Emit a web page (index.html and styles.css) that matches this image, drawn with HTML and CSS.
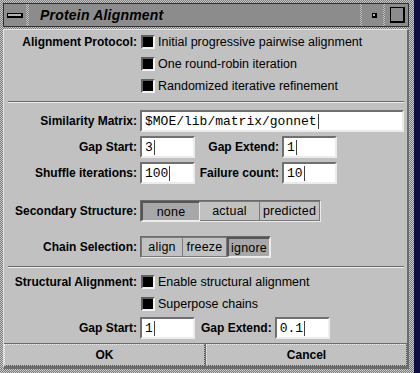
FILE: index.html
```html
<!DOCTYPE html>
<html lang="en">
<head>
  <meta charset="UTF-8">
  <meta name="viewport" content="width=device-width, initial-scale=1.0">
  <title>Protein Alignment</title>
  <link rel="stylesheet" href="styles.css">
</head>
<body>
  <div class="window">
    <div class="titlebar">
      <div class="tb-btn menu"><span class="menu-bar"></span></div>
      <div class="tb-title">Protein Alignment</div>
      <div class="tb-btn min"><span class="min-dot"></span></div>
      <div class="tb-btn max"><span class="max-box"></span></div>
    </div>

    <div class="panel">
      <div class="protocol">
        <div class="row">
          <span class="label">Alignment Protocol:</span>
          <span class="opt"><span class="box"></span>Initial progressive pairwise alignment</span>
        </div>
        <div class="row">
          <span class="label"></span>
          <span class="opt"><span class="box"></span>One round-robin iteration</span>
        </div>
        <div class="row">
          <span class="label"></span>
          <span class="opt"><span class="box"></span>Randomized iterative refinement</span>
        </div>
      </div>

      <div class="sep sep-top"></div>

      <div class="params">
        <span class="label">Similarity Matrix:</span>
        <span class="field wide">$MOE/lib/matrix/gonnet<span class="caret"></span></span>

        <span class="label">Gap Start:</span>
        <span class="field">3<span class="caret"></span></span>
        <span class="label">Gap Extend:</span>
        <span class="field">1<span class="caret"></span></span>
        <span></span>

        <span class="label">Shuffle iterations:</span>
        <span class="field">100<span class="caret"></span></span>
        <span class="label">Failure count:</span>
        <span class="field">10<span class="caret"></span></span>
        <span></span>
      </div>

      <div class="row seg-row secondary">
        <span class="label">Secondary Structure:</span>
        <div class="seg">
          <span class="seg-btn on w-none">none</span>
          <span class="seg-btn w-actual">actual</span>
          <span class="seg-btn w-pred">predicted</span>
        </div>
      </div>

      <div class="row seg-row chain">
        <span class="label">Chain Selection:</span>
        <div class="seg">
          <span class="seg-btn w-align">align</span>
          <span class="seg-btn w-freeze">freeze</span>
          <span class="seg-btn on w-ignore">ignore</span>
        </div>
      </div>

      <div class="sep sep-bottom"></div>

      <div class="structural">
        <div class="row">
          <span class="label">Structural Alignment:</span>
          <span class="opt"><span class="box"></span>Enable structural alignment</span>
        </div>
        <div class="row">
          <span class="label"></span>
          <span class="opt"><span class="box"></span>Superpose chains</span>
        </div>
        <div class="row gap-row">
          <span class="label">Gap Start:</span>
          <span class="field">1<span class="caret"></span></span>
          <span class="label inline">Gap Extend:</span>
          <span class="field">0.1<span class="caret"></span></span>
        </div>
      </div>

      <div class="actions">
        <span class="action">OK</span>
        <span class="action">Cancel</span>
      </div>
    </div>
  </div>
</body>
</html>
```

FILE: styles.css
```css
body {
  margin: 0;
  background-color: #0e0e42;
  font-family: "Liberation Sans", Arial, sans-serif;
  color: #000;
}
.window {
  width: 414px;
  height: 373px;
  box-sizing: border-box;
  padding: 3px 5px 0 3px;
  background: repeating-conic-gradient(#7c7c7c 0 25%, #c8c8c8 0 50%) 0 0 / 2px 2px;
  display: flex;
  flex-direction: column;
  gap: 2px;
}

/* title bar */
.titlebar {
  height: 24px;
  box-sizing: border-box;
  border: 1px solid #303030;
  display: flex;
  flex: none;
}
.tb-btn,
.tb-title {
  background-color: #8c8c8c;
  display: flex;
  align-items: center;
}
.tb-btn {
  justify-content: center;
}
.menu {
  width: 22px;
  margin-right: 3px;
}
.menu-bar {
  width: 13px;
  height: 2px;
  background-color: #b4b4b4;
  border: 1px solid #000;
  border-right-width: 2px;
  border-bottom-width: 2px;
}
.tb-title {
  flex: 1;
  padding-left: 11px;
  font-size: 14px;
  font-weight: bold;
  font-style: italic;
  letter-spacing: 0.2px;
  margin-right: 2px;
}
.min {
  width: 21px;
  margin-right: 2px;
}
.min-dot {
  width: 2px;
  height: 2px;
  background-color: #b4b4b4;
  border: 1px solid #000;
  border-right-width: 2px;
  border-bottom-width: 2px;
  margin-left: 3px;
}
.max {
  width: 23px;
}
.max-box {
  width: 12px;
  height: 13px;
  border: 1px solid #000;
  border-right-width: 2px;
  border-bottom-width: 2px;
  margin-left: 2px;
}

/* main panel */
.panel {
  height: 340px;
  box-sizing: border-box;
  background-color: #c1c1c1;
  border-style: solid;
  border-width: 1px 2px 3px 1px;
  border-color: #e4e4e4 #6c6c6c #6c6c6c #e4e4e4;
  display: flex;
  flex-direction: column;
}
.protocol {
  padding-top: 1px;
}
.row {
  display: flex;
  align-items: center;
  height: 22px;
}
.label {
  width: 133px;
  margin-right: 3px;
  flex: none;
  text-align: right;
  font-size: 12px;
  font-weight: bold;
  white-space: nowrap;
}
.label.inline {
  width: auto;
  margin-left: 6px;
}
.opt {
  display: flex;
  align-items: center;
  gap: 3px;
  margin-left: 1px;
  font-size: 12.5px;
  white-space: nowrap;
}
.box {
  width: 10px;
  height: 10px;
  background-color: #000;
  border: 2px solid;
  border-color: #606060 #f2f2f2 #f2f2f2 #606060;
}
.sep {
  height: 0;
  border-top: 1px solid #6c6c6c;
  border-bottom: 1px solid #ececec;
  margin: 0 3px 0 4px;
}
.sep-top {
  margin-top: 4px;
}
.sep-bottom {
  margin-top: 8px;
}

/* text fields */
.params {
  margin-top: 7px;
  padding-right: 3px;
  display: grid;
  grid-template-columns: 133px 55px 81px 55px 1fr;
  column-gap: 3px;
  row-gap: 4px;
  align-items: center;
}
.params .label {
  width: auto;
  margin-right: 0;
}
.field {
  width: 55px;
  height: 22px;
  box-sizing: border-box;
  background-color: #fff;
  border: 2px solid;
  border-color: #707070 #ececec #ececec #707070;
  padding-left: 3px;
  display: flex;
  align-items: center;
  font-family: "Liberation Mono", "DejaVu Sans Mono", monospace;
  font-size: 13px;
  flex: none;
}
.field.wide {
  width: auto;
  grid-column: 2 / -1;
}
.caret {
  width: 1px;
  height: 15px;
  margin-left: 1px;
  background-color: #404040;
}

/* radio groups */
.secondary {
  margin-top: 16px;
}
.chain {
  margin-top: 14px;
}
.seg {
  display: flex;
  height: 22px;
  box-sizing: border-box;
  border: 1px solid;
  border-color: #6a6a6a #ececec #ececec #6a6a6a;
}
.seg-btn {
  box-sizing: border-box;
  display: flex;
  align-items: center;
  justify-content: center;
  border: 1px solid #7a7a7a;
  font-size: 12.5px;
  letter-spacing: 0.2px;
}
.seg-btn + .seg-btn {
  border-left: none;
}
.seg-btn.on {
  background-color: #a8a8a8;
  border-style: solid;
  border-width: 2px 1px 1px 2px;
  border-color: #555 #ececec #ececec #555;
}
.w-none { width: 59px; }
.w-actual { width: 60px; }
.w-pred { width: 60px; }
.w-align { width: 42px; }
.w-freeze { width: 44px; }
.w-ignore { width: 43px; }

/* structural section */
.structural {
  margin-top: 3px;
}
.gap-row {
  margin-top: 2px;
}

/* bottom buttons */
.actions {
  margin-top: auto;
  display: flex;
  gap: 1px;
  padding-top: 1px;
  background-color: #6c6c6c;
}
.action {
  flex: 1;
  height: 22px;
  box-sizing: border-box;
  border: 1px dotted;
  border-color: #f0f0f0 #505050 #505050 #f0f0f0;
  background-color: #c1c1c1;
  display: flex;
  align-items: center;
  justify-content: center;
  font-size: 12px;
  font-weight: bold;
}
```
